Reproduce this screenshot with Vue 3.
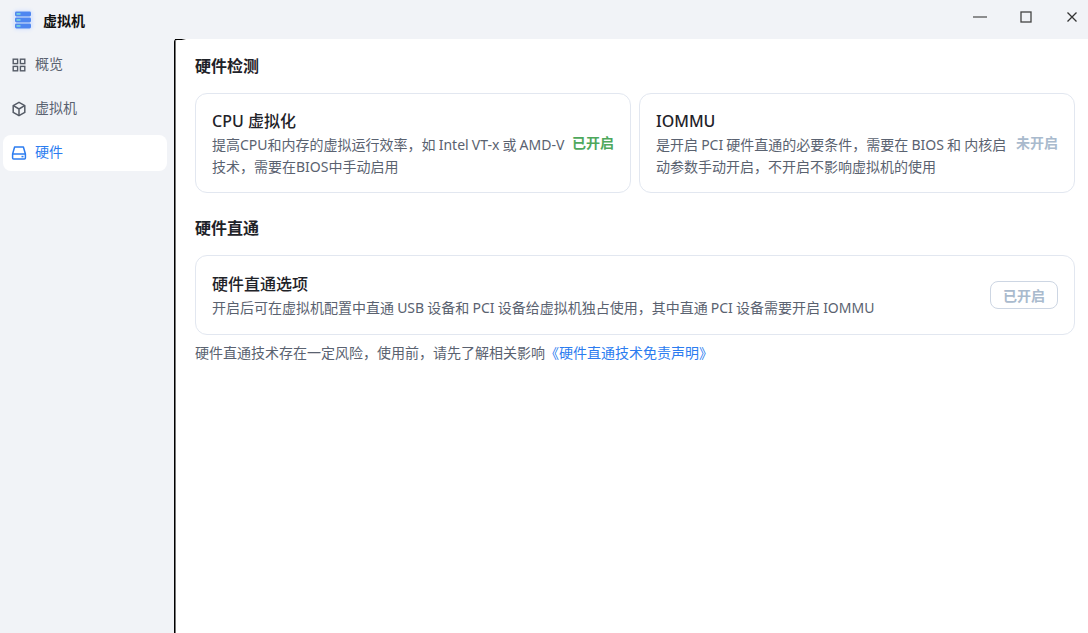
<script setup>
const navItems = [
  { key: 'overview', label: '概览', active: false },
  { key: 'vm', label: '虚拟机', active: false },
  { key: 'hardware', label: '硬件', active: true },
]
const checks = [
  { title: 'CPU 虚拟化', desc: '提高CPU和内存的虚拟运行效率，如 Intel VT-x 或 AMD-V 技术，需要在BIOS中手动启用', status: '已开启', cls: 'on' },
  { title: 'IOMMU', desc: '是开启 PCI 硬件直通的必要条件，需要在 BIOS 和 内核启动参数手动开启，不开启不影响虚拟机的使用', status: '未开启', cls: 'off' },
]
</script>

<template>
  <div class="app">
    <header class="titlebar">
      <div class="brand">
        <span class="logo">
          <svg width="16" height="18" viewBox="0 0 16 18">
            <rect x="0" y="0.5" width="16" height="5" rx="1.4" fill="#4f86f0" />
            <rect x="0" y="6.5" width="16" height="5" rx="1.4" fill="#4f86f0" />
            <rect x="0" y="12.5" width="16" height="5" rx="1.4" fill="#4f86f0" />
            <rect x="1.5" y="2.2" width="4" height="1.5" fill="#7fe0d8" />
            <rect x="1.5" y="8.2" width="4" height="1.5" fill="#7fe0d8" />
            <rect x="1.5" y="14.2" width="4" height="1.5" fill="#7fe0d8" />
          </svg>
        </span>
        <span class="app-name">虚拟机</span>
      </div>
      <div class="win-controls">
        <button class="win-btn"><svg width="14" height="14" viewBox="0 0 14 14"><path d="M0 7h14" stroke="#555" stroke-width="1.3" /></svg></button>
        <button class="win-btn"><svg width="12" height="12" viewBox="0 0 12 12"><rect x="1" y="1" width="10" height="10" fill="none" stroke="#444" stroke-width="1.3" /></svg></button>
        <button class="win-btn"><svg width="12" height="12" viewBox="0 0 12 12"><path d="M1.5 1.5l9 9M10.5 1.5l-9 9" stroke="#333" stroke-width="1.3" /></svg></button>
      </div>
    </header>
    <div class="body">
      <nav class="sidebar">
        <a v-for="item in navItems" :key="item.key" class="nav-item" :class="{ active: item.active }">
          <svg v-if="item.key === 'overview'" class="nav-icon" viewBox="0 0 16 16" fill="none" stroke="#555b66" stroke-width="1.4">
            <rect x="2.2" y="2.2" width="4.4" height="4.4" />
            <rect x="9.4" y="2.2" width="4.4" height="4.4" />
            <rect x="2.2" y="9.4" width="4.4" height="4.4" />
            <rect x="9.4" y="9.4" width="4.4" height="4.4" />
          </svg>
          <svg v-else-if="item.key === 'vm'" class="nav-icon" viewBox="0 0 16 16" fill="none" stroke="#555b66" stroke-width="1.5" stroke-linejoin="round">
            <path d="M8 1.3l5.8 3.3v6.8L8 14.7l-5.8-3.3V4.6z" />
            <path d="M2.4 4.7L8 8l5.6-3.3M8 8v6.5" />
          </svg>
          <svg v-else class="nav-icon" viewBox="0 0 16 16" fill="none" stroke="#2b7cf0" stroke-width="1.5" stroke-linejoin="round">
            <path d="M3.6 2h8.8l2 7v4a1 1 0 0 1-1 1H2.6a1 1 0 0 1-1-1V9z" />
            <path d="M1.6 9h12.8" />
            <path d="M10.5 11.6h2" stroke-width="1.5" />
          </svg>
          <span>{{ item.label }}</span>
        </a>
      </nav>
      <main class="main">
        <h2 class="section-title">硬件检测</h2>
        <section class="check-grid">
          <article v-for="c in checks" :key="c.title" class="card check-card">
            <div class="card-text">
              <h3 class="card-title">{{ c.title }}</h3>
              <p class="card-desc">{{ c.desc }}</p>
            </div>
            <span class="status" :class="c.cls">{{ c.status }}</span>
          </article>
        </section>
        <h2 class="section-title second">硬件直通</h2>
        <article class="card pass-card">
          <div class="card-text">
            <h3 class="card-title">硬件直通选项</h3>
            <p class="card-desc">开启后可在虚拟机配置中直通 USB 设备和 PCI 设备给虚拟机独占使用，其中直通 PCI 设备需要开启 IOMMU</p>
          </div>
          <button class="pill" disabled>已开启</button>
        </article>
        <p class="note">硬件直通技术存在一定风险，使用前，请先了解相关影响<a class="link">《硬件直通技术免责声明》</a></p>
      </main>
    </div>
  </div>
</template>

<style>
html, body { margin: 0; padding: 0; }
</style>

<style scoped>
.app {
  width: 1088px;
  height: 633px;
  display: flex;
  flex-direction: column;
  background: #f1f3f7;
  overflow: hidden;
  font-family: "Noto Sans", "Noto Sans CJK SC", sans-serif;
  color: #1f2329;
}
.titlebar {
  height: 39px;
  flex: none;
  display: flex;
  align-items: center;
  justify-content: space-between;
}
.brand {
  display: flex;
  align-items: center;
  gap: 10px;
  padding-left: 13px;
}
.logo {
  width: 20px;
  height: 20px;
  display: flex;
  align-items: center;
  justify-content: center;
  background: #dfe8fb;
  border-radius: 5px;
  box-shadow: 0 0 3px 1px #e3eafb;
}
.app-name {
  font-size: 14px;
  font-weight: 700;
  color: #111;
}
.win-controls {
  display: flex;
  gap: 16px;
  padding-right: 1px;
}
.win-btn {
  width: 30px;
  height: 34px;
  margin-bottom: 5px;
  padding: 0;
  border: 0;
  background: none;
  display: flex;
  align-items: center;
  justify-content: center;
}
.body {
  flex: 1;
  display: flex;
  min-height: 0;
}
.sidebar {
  width: 174px;
  flex: none;
  box-sizing: border-box;
  padding: 8px 7px 0 3px;
  display: flex;
  flex-direction: column;
  gap: 8px;
}
.nav-item {
  height: 36px;
  border-radius: 8px;
  display: flex;
  align-items: center;
  gap: 8px;
  padding-left: 8px;
  font-size: 14px;
  line-height: 20px;
  color: #5a6270;
}
.nav-item span {
  position: relative;
  top: -1px;
}
.nav-item.active {
  background: #fff;
  color: #2b7cf0;
}
.nav-icon {
  width: 16px;
  height: 16px;
  flex: none;
}
.main {
  position: relative;
  flex: 1;
  min-width: 0;
  box-sizing: border-box;
  background: #fff;
  border-left: 1px solid #000;
  box-shadow: inset 1px 0 0 #777;
  border-top-left-radius: 3px;
  padding: 15px 13px 0 20px;
}
.main::before {
  content: "";
  position: absolute;
  left: 0;
  top: 0;
  width: 11px;
  height: 1px;
  background: linear-gradient(90deg, #000, #000 60%, transparent);
}
.section-title {
  margin: 0;
  font-size: 16px;
  line-height: 24px;
  font-weight: 700;
  color: #1f2329;
}
.section-title.second {
  margin-top: 23px;
}
.check-grid {
  margin-top: 15px;
  display: grid;
  grid-template-columns: 1fr 1fr;
  gap: 8px;
}
.card {
  box-sizing: border-box;
  border: 1px solid #e2e7f0;
  border-radius: 12px;
  padding: 0 16px;
  display: flex;
  background: #fff;
}
.check-card {
  height: 100px;
  padding-top: 15px;
  align-items: flex-start;
  gap: 4px;
}
.pass-card {
  height: 80px;
  margin-top: 15px;
  align-items: center;
  justify-content: space-between;
}
.card-text {
  flex: 1;
  min-width: 0;
}
.card-title {
  margin: 0 0 1px;
  font-size: 16px;
  line-height: 24px;
  font-weight: 500;
  color: #1f2329;
}
.card-desc {
  margin: 0;
  font-size: 14px;
  line-height: 22px;
  word-spacing: -0.5px;
  color: #5a6270;
}
.status {
  flex: none;
  margin-top: 23px;
  font-size: 14px;
  line-height: 22px;
  font-weight: 700;
}
.status.on { color: #4ea85c; }
.status.off { color: #a9bacd; }
.pill {
  flex: none;
  width: 68px;
  height: 28px;
  padding: 0;
  box-sizing: border-box;
  border: 1px solid #cdd6e3;
  border-radius: 8px;
  background: #fff;
  color: #a9bacd;
  font-family: inherit;
  font-size: 14px;
  font-weight: 700;
}
.note {
  margin: 7px 0 0;
  font-size: 14px;
  line-height: 22px;
  color: #5a6270;
}
.link {
  color: #2b7cf0;
}
</style>
